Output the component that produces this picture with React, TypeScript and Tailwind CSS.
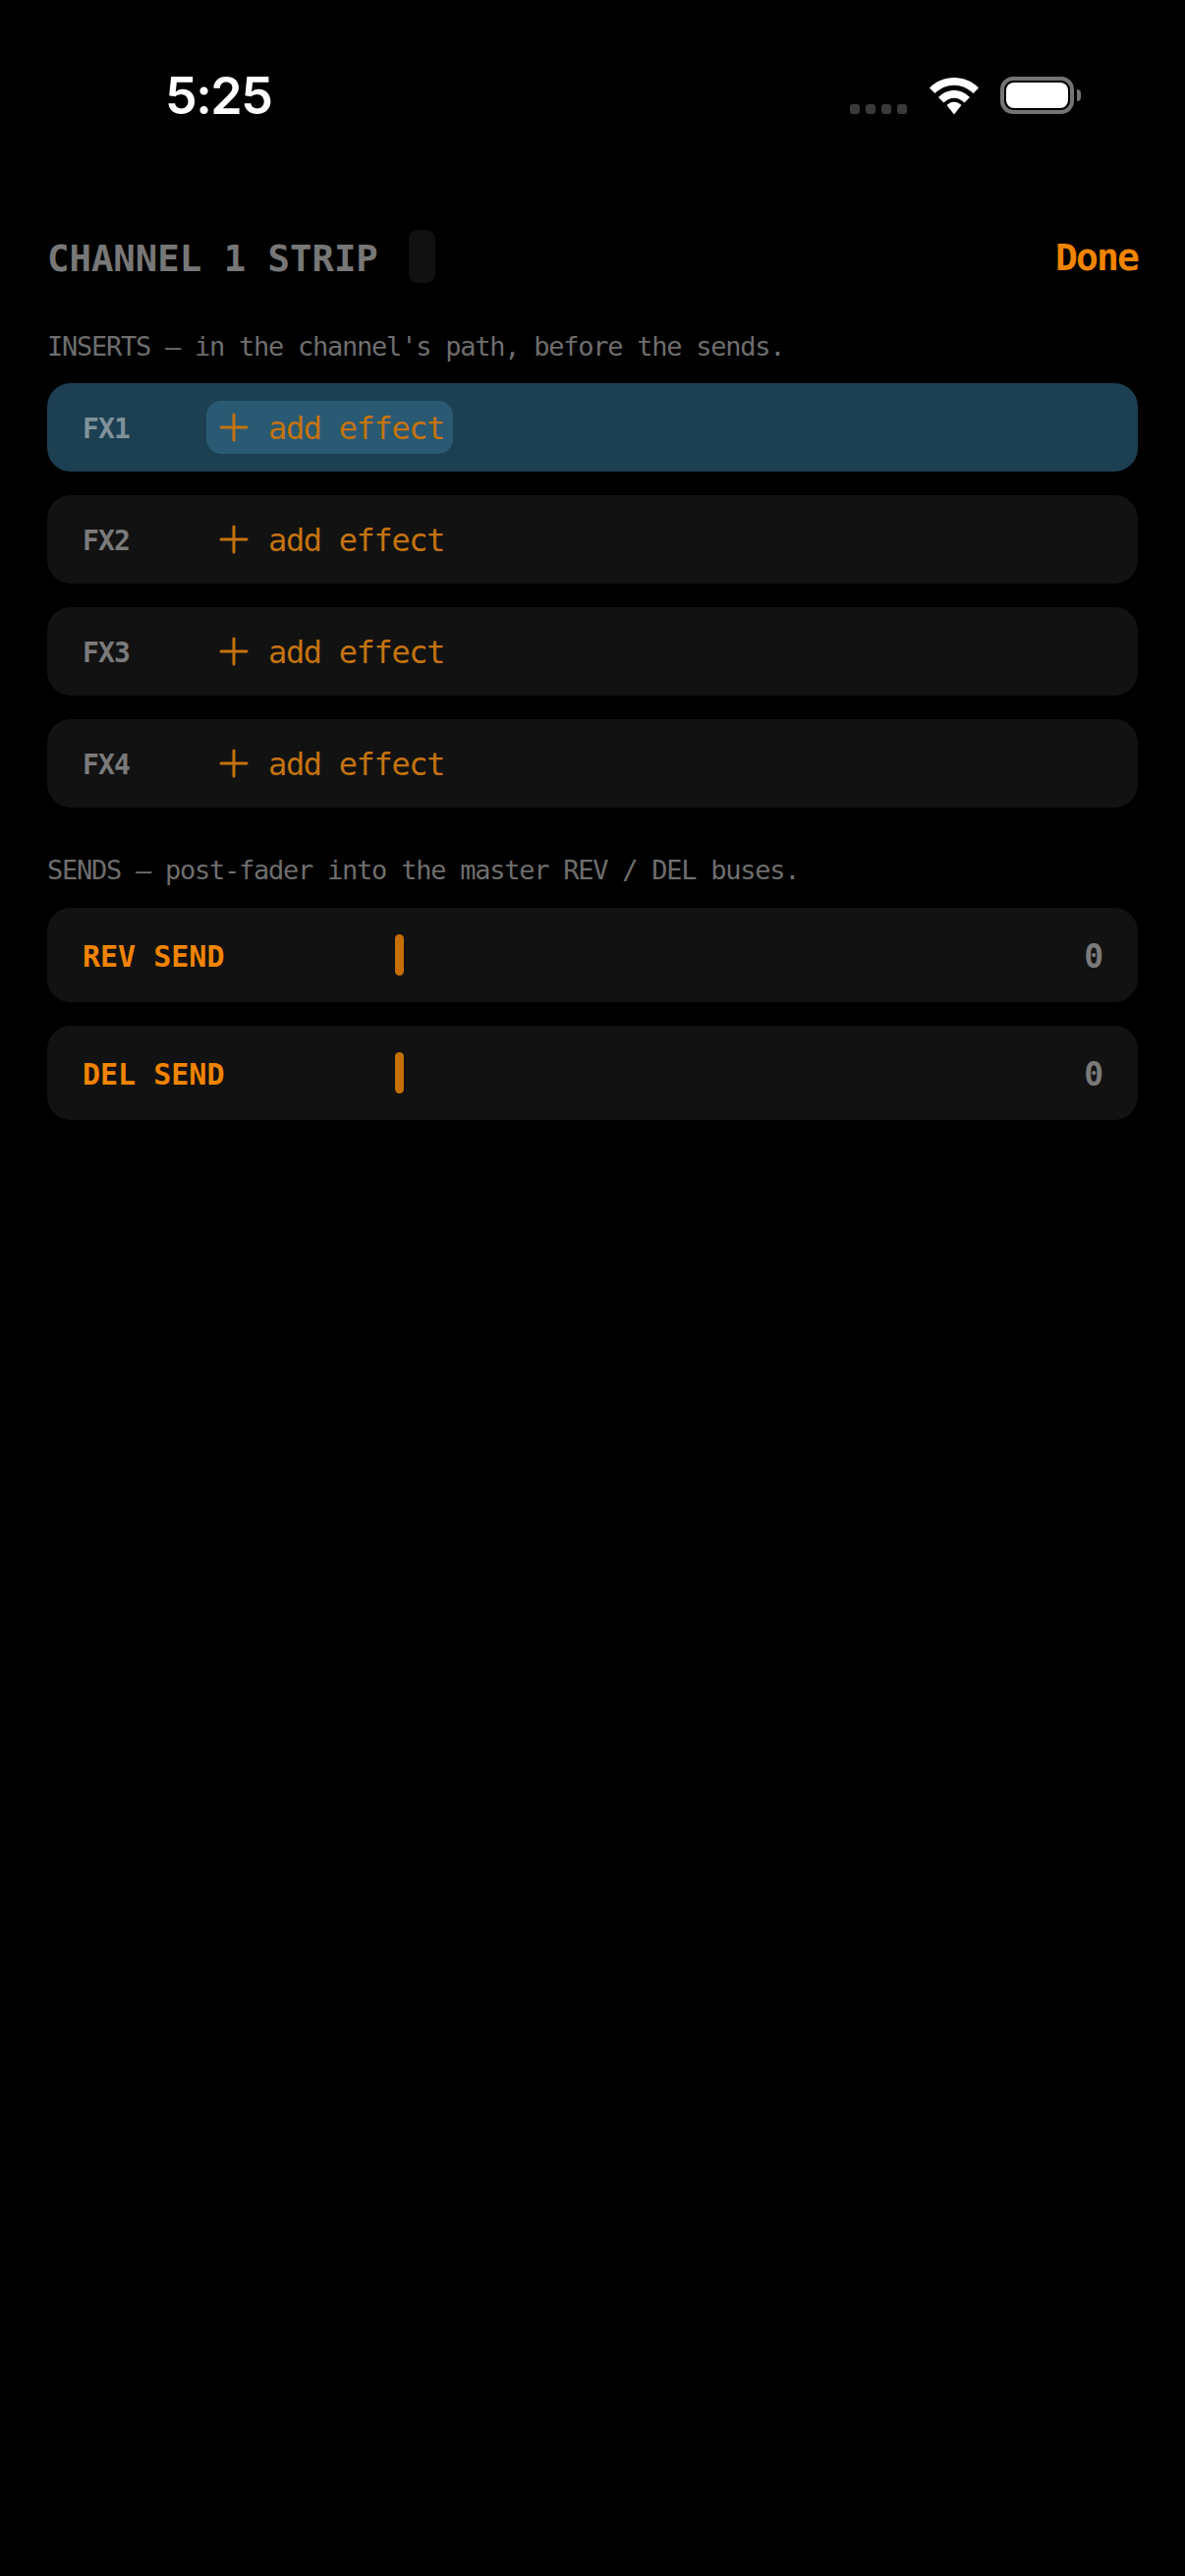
const mono = "font-['DejaVu_Sans_Mono',monospace]";

function StatusBar() {
  return (
    <div className="h-[234px] flex items-start justify-between pl-[168px] pr-[106px] pt-[68px]">
      <span className="font-['Inter',sans-serif] font-semibold text-[52px] tracking-[-1.5px] leading-[60px] text-white">
        5:25
      </span>
      <div className="flex items-start pt-[10px]">
        <div className="flex gap-[6px] mt-[28px] mr-[23px]">
          <div className="w-[10px] h-[10px] rounded-[3px] bg-[#3a3a3a]" />
          <div className="w-[10px] h-[10px] rounded-[3px] bg-[#3a3a3a]" />
          <div className="w-[10px] h-[10px] rounded-[3px] bg-[#3a3a3a]" />
          <div className="w-[10px] h-[10px] rounded-[3px] bg-[#3a3a3a]" />
        </div>
        <svg width="50" height="38" viewBox="0 0 50 38" fill="#fff" className="mt-px mr-[22px]">
          <path d="M0 10.5C13-3.5 37-3.5 50 10.5L44.5 16C33 5 17 5 5.5 16Z" />
          <path d="M9 20C18 10.5 32 10.5 41 20L35.5 25.5C29 19 21 19 14.5 25.5Z" />
          <path d="M17.5 28C22 23.5 28 23.5 32.5 28L25 37.5Z" />
        </svg>
        <div className="w-[75px] h-[38px] rounded-[13px] border-[4px] border-[#747474] p-[2px] flex">
          <div className="flex-1 rounded-[8px] bg-white" />
        </div>
        <div className="w-[4px] h-[12px] mt-[13px] ml-[3px] rounded-r-full bg-[#747474]" />
      </div>
    </div>
  );
}

function PlusIcon() {
  return (
    <svg width="30" height="30" viewBox="0 0 30 30" className="shrink-0" stroke="currentColor" strokeWidth="3" strokeLinecap="round">
      <path d="M15 2V28M2 15H28" />
    </svg>
  );
}

function InsertRow({ name, selected }: { name: string; selected?: boolean }) {
  return (
    <div className={`h-[90px] rounded-[24px] pl-[36px] flex items-center ${selected ? "bg-[#1c3f52]" : "bg-[#121212]"}`}>
      <span className={`mt-[3px] w-[126px] text-[28px] tracking-[-0.8px] font-bold ${selected ? "text-[#80929c]" : "text-[#7a7a7a]"}`}>
        {name}
      </span>
      <div className={`h-[54px] w-[251px] rounded-[15px] pl-[13px] flex items-center gap-[20px] text-[#c4730f] ${selected ? "bg-[#2a5a73]" : ""}`}>
        <PlusIcon />
        <span className="mt-[2px] text-[32px] tracking-[-1.35px]">add effect</span>
      </div>
    </div>
  );
}

function SendRow({ name }: { name: string }) {
  return (
    <div className="h-[96px] rounded-[24px] bg-[#121212] px-[36px] flex items-center">
      <span className="mt-[2px] w-[318px] text-[30px] font-bold text-[#f08400]">{name}</span>
      <div className="w-[9px] h-[42px] rounded-full bg-[#c46f00]" />
      <span className="mt-[3px] ml-auto text-[33px] tracking-[-1px] font-bold text-[#7a7a7a]">0</span>
    </div>
  );
}

export default function App() {
  return (
    <div className={`min-h-screen bg-black ${mono}`}>
      <StatusBar />

      <div className="px-[48px]">
        <div className="h-[54px] flex items-center">
          <span className="mt-[5px] text-[37.3px] font-bold text-[#777777]">CHANNEL 1 STRIP</span>
          <div className="ml-[31px] w-[27px] h-[54px] rounded-[9px] bg-[#111111]" />
          <span className="mt-[3px] ml-auto text-[38px] tracking-[-1.9px] font-bold text-[#f08400]">Done</span>
        </div>

        <p className="mt-[49px] mb-[21px] text-[27px] tracking-[-1.25px] leading-[32px] text-[#6e6e6e]">
          INSERTS — in the channel's path, before the sends.
        </p>

        <div className="flex flex-col gap-[24px]">
          <InsertRow name="FX1" selected />
          <InsertRow name="FX2" />
          <InsertRow name="FX3" />
          <InsertRow name="FX4" />
        </div>

        <p className="mt-[48px] mb-[22px] text-[27px] tracking-[-1.25px] leading-[32px] text-[#6e6e6e]">
          SENDS — post-fader into the master REV / DEL buses.
        </p>

        <div className="flex flex-col gap-[24px]">
          <SendRow name="REV SEND" />
          <SendRow name="DEL SEND" />
        </div>
      </div>
    </div>
  );
}
